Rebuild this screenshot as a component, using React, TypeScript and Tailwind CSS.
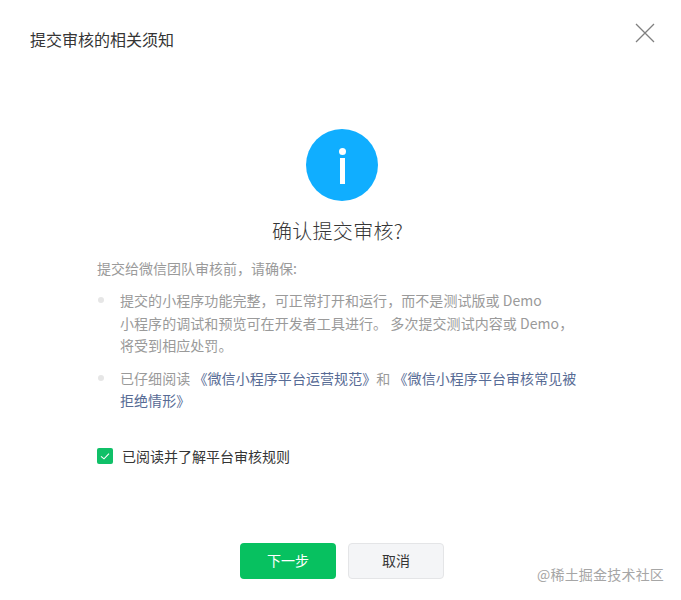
export default function App() {
  return (
    <div className="relative flex h-[600px] w-[681px] flex-col overflow-hidden bg-white font-['Noto_Sans_CJK_SC','Liberation_Sans',sans-serif] text-[14px]">
      <div className="flex items-start justify-between pl-[30px] pr-[26px] pt-[23px]">
        <h1 className="mt-[4px] text-[16px] leading-6 font-normal text-[#353535]">提交审核的相关须知</h1>
        <button className="h-[20px] w-[20px] text-[#808080]" aria-label="关闭">
          <svg viewBox="0 0 20 20" className="h-[20px] w-[20px]" fill="none" stroke="currentColor" strokeWidth="1.3">
            <path d="M1 1 19 19M19 1 1 19" />
          </svg>
        </button>
      </div>
      <div className="mt-[78px] flex justify-center pl-[3px]">
        <div className="flex h-[72px] w-[72px] flex-col items-center rounded-full bg-[#10aeff]">
          <div className="mt-[19px] h-[7px] w-[7px] rounded-full bg-white" />
          <div className="mt-[3px] h-[26px] w-[5px] bg-white" />
        </div>
      </div>
      <h2 className="mt-[16px] pr-[6px] text-center text-[20px] leading-[28px] font-light tracking-[0.3px] text-[#353535]">确认提交审核?</h2>
      <div className="mt-[12px] pl-[97px] pr-[100px] text-[#9a9a9a]">
        <p className="leading-[23px]">提交给微信团队审核前，请确保:</p>
        <ul className="mt-[9px] flex flex-col gap-[10px] tracking-[0.06px]">
          <li className="relative pl-[23px] leading-[22.5px]">
            <span className="absolute left-[1px] top-[8px] h-[6px] w-[6px] rounded-full bg-[#e6e6e6]" />
            提交的小程序功能完整，可正常打开和运行，而不是测试版或 Demo<br />
            小程序的调试和预览可在开发者工具进行。 多次提交测试内容或 Demo，<br />
            将受到相应处罚。
          </li>
          <li className="relative pl-[23px] leading-[22.5px]">
            <span className="absolute left-[1px] top-[8px] h-[6px] w-[6px] rounded-full bg-[#e6e6e6]" />
            已仔细阅读 <span className="text-[#576b95]">《微信小程序平台运营规范》</span>和 <span className="text-[#576b95]">《微信小程序平台审核常见被<br />拒绝情形》</span>
          </li>
        </ul>
      </div>
      <label className="mt-[34px] ml-[97px] flex items-center gap-[9px] text-[#353535]">
        <span className="flex h-[16px] w-[16px] items-center justify-center rounded-[2px] bg-[#10c068]">
          <svg viewBox="0 0 16 16" className="h-[16px] w-[16px]" fill="none" stroke="#fff" strokeWidth="1.1">
            <path d="M4 8.3 7 10.8 12 5.6" />
          </svg>
        </span>
        已阅读并了解平台审核规则
      </label>
      <div className="mt-[76px] flex justify-center gap-[12px] pl-[3px]">
        <button className="h-[36px] w-[96px] rounded-[4px] bg-[#07c160] text-white">下一步</button>
        <button className="h-[36px] w-[96px] rounded-[4px] border border-[#e4e5e7] bg-[#f4f5f7] text-[#353535]">取消</button>
      </div>
      <div className="absolute left-[537px] top-[564px] text-[14px] leading-5 tracking-[0.2px] text-[#a6a6a6]">@稀土掘金技术社区</div>
    </div>
  );
}
